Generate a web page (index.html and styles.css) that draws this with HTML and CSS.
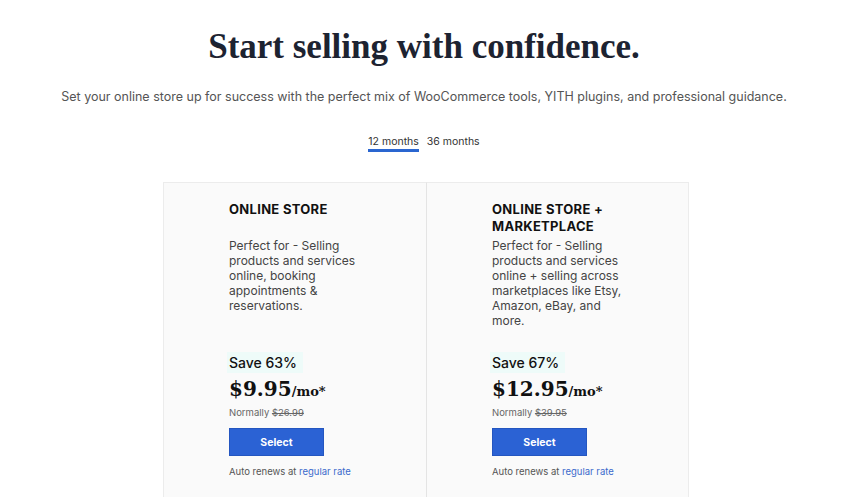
FILE: index.html
```html
<!DOCTYPE html>
<html lang="en">
<head>
    <meta charset="UTF-8">
    <meta name="viewport" content="width=device-width, initial-scale=1.0">
    <title>Start selling with confidence</title>
    <link rel="stylesheet" href="styles.css">
</head>
<body>
    <h1>Start selling with confidence.</h1>
    <p class="intro">Set your online store up for success with the perfect mix of WooCommerce tools, YITH plugins, and professional guidance.</p>

    <div class="tabs">
        <span class="tab active">12 months</span>
        <span class="tab">36 months</span>
    </div>

    <div class="plans">
        <div class="plan">
            <h2 class="plan-name">ONLINE STORE</h2>
            <p class="plan-desc">Perfect for - Selling products and services online, booking appointments &amp; reservations.</p>
            <span class="save">Save 63%</span>
            <div class="price">$9.95<span class="per">/mo*</span></div>
            <p class="normally">Normally <s>$26.99</s></p>
            <button class="btn">Select</button>
            <p class="renews">Auto renews at <a href="#">regular rate</a></p>
        </div>
        <div class="plan">
            <h2 class="plan-name">ONLINE STORE + MARKETPLACE</h2>
            <p class="plan-desc">Perfect for - Selling products and services online + selling across marketplaces like Etsy, Amazon, eBay, and more.</p>
            <span class="save">Save 67%</span>
            <div class="price">$12.95<span class="per">/mo*</span></div>
            <p class="normally">Normally <s>$39.95</s></p>
            <button class="btn">Select</button>
            <p class="renews">Auto renews at <a href="#">regular rate</a></p>
        </div>
    </div>
</body>
</html>
```

FILE: styles.css
```css
body {
    font-family: Inter, "Open Sans", sans-serif;
    text-align: center;
    margin: 0;
    color: #222;
    background: #fff;
}
h1 {
    font-family: "Liberation Serif", serif;
    font-size: 35px;
    font-weight: bold;
    color: #1d2331;
    margin: 27px 0 0;
    line-height: 40px;
}
.intro {
    font-size: 12.5px;
    color: #555;
    margin: 21px 0 0;
    line-height: 18px;
}
.tabs {
    margin-top: 29px;
    display: flex;
    justify-content: center;
    gap: 8px;
}
.tab {
    font-size: 10.5px;
    color: #333;
    border-bottom: 3px solid transparent;
    line-height: 14px;
}
.tab.active {
    border-bottom-color: #2a66d0;
}
.plans {
    display: flex;
    justify-content: center;
    margin: 30px 0 0 4px;
}
.plan {
    width: 263px;
    height: 330px;
    box-sizing: border-box;
    padding: 18px 0 0 65px;
    background: #fafafa;
    border: 1px solid #ececec;
    text-align: left;
}
.plan + .plan {
    border-left: 1px solid #e4e4e4;
}
.plan:first-child {
    border-right: none;
}
.plan-name {
    font-size: 13px;
    font-weight: 700;
    color: #111;
    margin: 0;
    line-height: 17px;
    min-height: 34px;
    width: 150px;
    letter-spacing: 0.3px;
}
.plan-desc {
    font-size: 12px;
    color: #444;
    line-height: 15px;
    margin: 3px 0 0;
    width: 136px;
    height: 108px;
}
.save {
    display: inline-block;
    font-size: 14px;
    font-weight: 500;
    color: #111;
    background: #eefbf9;
    padding: 2px 6px 2px 2px;
    margin: 6px 0 0 -2px;
    line-height: 17px;
}
.price {
    font-family: "DejaVu Serif", serif;
    font-weight: bold;
    font-size: 20px;
    color: #111;
    margin-top: 3px;
    line-height: 26px;
}
.per {
    font-size: 13px;
}
.normally {
    font-size: 9.5px;
    color: #666;
    margin: 1px 0 0;
    line-height: 14px;
}
.btn {
    display: block;
    width: 95px;
    height: 28px;
    margin-top: 8px;
    background: #2b62d4;
    color: #fff;
    border: 1px solid #2456c0;
    font-family: inherit;
    font-weight: 700;
    font-size: 10.5px;
    cursor: pointer;
}
.renews {
    font-size: 9.5px;
    color: #555;
    margin: 9px 0 0;
    line-height: 14px;
}
.renews a {
    color: #3a6acc;
    text-decoration: none;
}
```
